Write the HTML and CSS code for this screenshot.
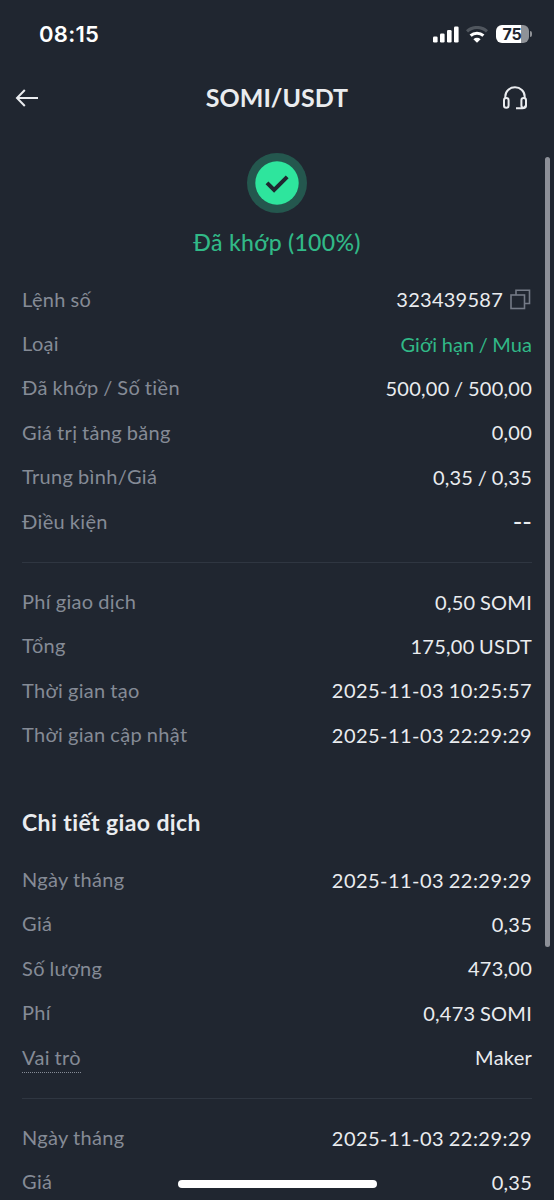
FILE: index.html
```html
<!DOCTYPE html>
<html lang="vi">
<head>
    <meta charset="UTF-8">
    <meta name="viewport" content="width=device-width, initial-scale=1.0">
    <title>SOMI/USDT</title>
    <link rel="stylesheet" href="styles.css">
</head>
<body>

<div class="screen">
    <div class="statusBar">
        <span class="time">08:15</span>
        <div class="statusIcons">
            <svg class="signal" width="26" height="17" viewBox="0 0 26 17" fill="#fff">
                <rect x="0" y="10.5" width="4.6" height="6" rx="1.3"/>
                <rect x="7" y="7.5" width="4.6" height="9" rx="1.3"/>
                <rect x="14" y="4" width="4.6" height="12.5" rx="1.3"/>
                <rect x="21" y="0.5" width="4.6" height="16" rx="1.3"/>
            </svg>
            <svg class="wifi" width="22" height="17" viewBox="0 0 22 17" fill="none">
                <path d="M1 5.4a14.5 14.5 0 0 1 20 0" stroke="#50565e" stroke-width="3"/>
                <path d="M4.6 9.7a9.3 9.3 0 0 1 12.8 0" stroke="#fff" stroke-width="3"/>
                <path d="M7.4 13.2a5.2 5.2 0 0 1 7.2 0L11 16.8z" fill="#fff"/>
            </svg>
            <div class="battery"><span class="batteryLevel">75</span></div>
            <div class="batteryTip"></div>
        </div>
    </div>

    <div class="header">
        <svg class="backIcon" width="24" height="20" viewBox="0 0 24 20" fill="none" stroke="#eaecef" stroke-width="2">
            <path d="M9.8 2L2 10l7.8 8M2 10h21"/>
        </svg>
        <h1 class="title">SOMI/USDT</h1>
        <svg class="supportIcon" width="26" height="24" viewBox="0 0 26 24" fill="none" stroke="#eaecef" stroke-width="2">
            <path d="M3.3 12V10.5a9.7 9.2 0 0 1 19.4 0V12"/>
            <rect x="2" y="12" width="4.6" height="9.8" rx="2.3"/>
            <rect x="19.4" y="12" width="4.6" height="9.8" rx="2.3"/>
            <path d="M23.4 19.5c0 2-1 2.8-3 2.8H14"/>
        </svg>
    </div>

    <div class="result">
        <div class="badge">
            <svg width="44" height="44" viewBox="0 0 44 44">
                <circle cx="22" cy="22" r="21.7" fill="#2ee59d"/>
                <path d="M12 21.8l7.1 7.2L32.2 15.8" fill="none" stroke="#202630" stroke-width="4"/>
            </svg>
        </div>
        <div class="resultText">Đã khớp (100%)</div>
    </div>

    <div class="list">
        <div class="row"><span class="label">Lệnh số</span><span class="value">323439587
            <svg class="copyIcon" width="21" height="21" viewBox="0 0 21 21" fill="none" stroke="#747a86" stroke-width="1.6">
                <rect x="1" y="6" width="13.5" height="13.5"/>
                <path d="M6 6V1.2h13.5V14.5h-5"/>
            </svg></span></div>
        <div class="row"><span class="label">Loại</span><span class="value green">Giới hạn / Mua</span></div>
        <div class="row"><span class="label">Đã khớp / Số tiền</span><span class="value">500,00 / 500,00</span></div>
        <div class="row"><span class="label">Giá trị tảng băng</span><span class="value">0,00</span></div>
        <div class="row"><span class="label">Trung bình/Giá</span><span class="value">0,35 / 0,35</span></div>
        <div class="row"><span class="label">Điều kiện</span><span class="value empty">--</span></div>
    </div>
    <div class="divider"></div>
    <div class="list">
        <div class="row"><span class="label">Phí giao dịch</span><span class="value">0,50 SOMI</span></div>
        <div class="row"><span class="label">Tổng</span><span class="value">175,00 USDT</span></div>
        <div class="row"><span class="label">Thời gian tạo</span><span class="value date">2025-11-03 10:25:57</span></div>
        <div class="row"><span class="label">Thời gian cập nhật</span><span class="value date">2025-11-03 22:29:29</span></div>
    </div>

    <h2 class="sectionTitle">Chi tiết giao dịch</h2>
    <div class="list">
        <div class="row"><span class="label">Ngày tháng</span><span class="value date">2025-11-03 22:29:29</span></div>
        <div class="row"><span class="label">Giá</span><span class="value">0,35</span></div>
        <div class="row"><span class="label">Số lượng</span><span class="value">473,00</span></div>
        <div class="row"><span class="label">Phí</span><span class="value">0,473 SOMI</span></div>
        <div class="row"><span class="label"><span class="hint">Vai trò</span></span><span class="value">Maker</span></div>
    </div>
    <div class="divider"></div>
    <div class="list">
        <div class="row"><span class="label">Ngày tháng</span><span class="value date">2025-11-03 22:29:29</span></div>
        <div class="row"><span class="label">Giá</span><span class="value">0,35</span></div>
    </div>

    <div class="scrollbar"></div>
    <div class="homeIndicator"></div>
</div>

</body>
</html>
```
FILE: styles.css
```css
* {
    box-sizing: border-box;
}
body {
    margin: 0;
    background: #202630;
    font-family: Lato, "Noto Sans", sans-serif;
    font-variant-ligatures: none;
    color: #eaecef;
}
.screen {
    position: relative;
    height: 1200px;
    overflow: hidden;
}
.statusBar {
    display: flex;
    justify-content: space-between;
    align-items: center;
    height: 68px;
    padding: 0 22px 0 39px;
}
.time {
    font-family: Inter, sans-serif;
    font-size: 22px;
    font-weight: 600;
    letter-spacing: 0.3px;
    color: #fff;
}
.statusIcons {
    display: flex;
    align-items: center;
}
.wifi {
    margin: 0 8px 0 7px;
}
.battery {
    width: 33px;
    height: 18px;
    border-radius: 6px;
    background: linear-gradient(to right, #fff 76%, #8f9297 76%);
    text-align: center;
}
.batteryLevel {
    display: block;
    padding-right: 1px;
    font-family: Inter, sans-serif;
    font-size: 16px;
    font-weight: 700;
    line-height: 18px;
    letter-spacing: -0.3px;
    color: #202630;
}
.batteryTip {
    width: 2px;
    height: 6px;
    margin-left: 1px;
    border-radius: 0 2px 2px 0;
    background: #8f9297;
}
.header {
    display: grid;
    grid-template-columns: 26px 1fr 26px;
    align-items: center;
    height: 60px;
    padding: 0 26px 0 15px;
}
.title {
    margin: 0;
    padding: 0 0 2px 11px;
    text-align: center;
    font-size: 25px;
    font-weight: 700;
}
.result {
    display: flex;
    flex-direction: column;
    align-items: center;
    height: 149px;
    padding-top: 25px;
}
.badge {
    display: flex;
    align-items: center;
    justify-content: center;
    width: 60px;
    height: 60px;
    border-radius: 50%;
    background: #24574e;
}
.resultText {
    margin-top: 14px;
    font-size: 23px;
    line-height: 30px;
    letter-spacing: 0.3px;
    font-weight: 500;
    color: #31b987;
}
.list {
    padding: 0 22px;
}
.row {
    display: flex;
    justify-content: space-between;
    align-items: center;
    height: 44.4px;
    font-size: 20px;
    line-height: 26px;
}
.label {
    padding-bottom: 1px;
    letter-spacing: 0.35px;
    word-spacing: -0.8px;
    color: #858b96;
}
.value {
    display: flex;
    align-items: center;
    gap: 7px;
    letter-spacing: 0.25px;
    word-spacing: -0.8px;
}
.copyIcon {
    margin-right: 1px;
}
.date {
    letter-spacing: 0.45px;
}
.empty {
    font-size: 26px;
    letter-spacing: 0;
}
.green {
    letter-spacing: 0.1px;
    color: #31b987;
}
.hint {
    padding-bottom: 3px;
    border-bottom: 1px dotted #858b96;
}
.divider {
    height: 1px;
    margin: 18.5px 22px 16.5px;
    background: #2f3641;
}
.sectionTitle {
    margin: 0;
    padding: 50.5px 22px 20px;
    font-size: 23px;
    line-height: 30px;
    letter-spacing: 0.4px;
    font-weight: 700;
}
.scrollbar {
    position: absolute;
    top: 157px;
    right: 4px;
    width: 5px;
    height: 790px;
    border-radius: 3px;
    background: #8d9098;
}
.homeIndicator {
    position: absolute;
    left: 178px;
    bottom: 12px;
    width: 199px;
    height: 8px;
    border-radius: 4px;
    background: #fff;
}
```
